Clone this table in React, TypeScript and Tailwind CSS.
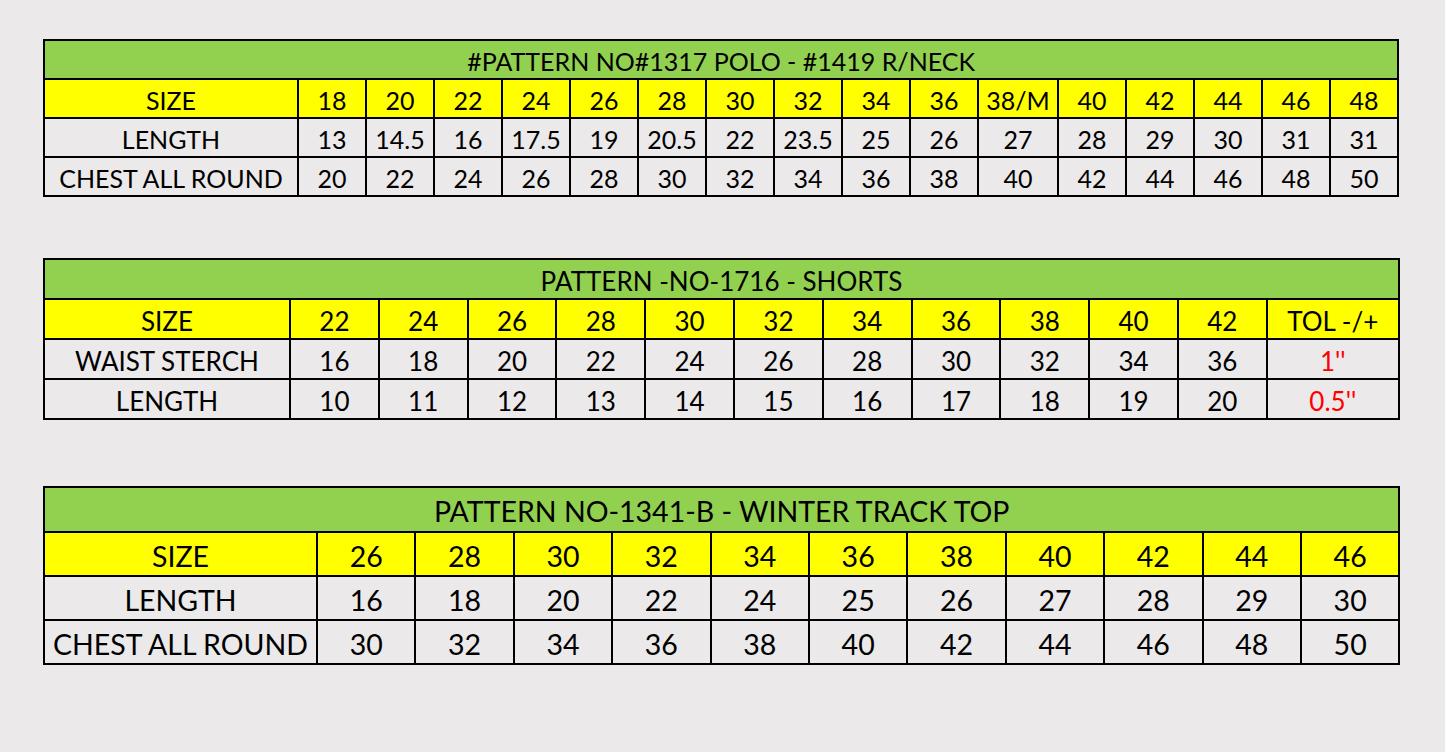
import React from "react";

const FONT = { fontFamily: "Lato, 'Open Sans', sans-serif" };

const t1Sizes = ["18", "20", "22", "24", "26", "28", "30", "32", "34", "36", "38/M", "40", "42", "44", "46", "48"];
const t1Len = ["13", "14.5", "16", "17.5", "19", "20.5", "22", "23.5", "25", "26", "27", "28", "29", "30", "31", "31"];
const t1Chest = ["20", "22", "24", "26", "28", "30", "32", "34", "36", "38", "40", "42", "44", "46", "48", "50"];

const t2Sizes = ["22", "24", "26", "28", "30", "32", "34", "36", "38", "40", "42"];
const t2Waist = ["16", "18", "20", "22", "24", "26", "28", "30", "32", "34", "36"];
const t2Len = ["10", "11", "12", "13", "14", "15", "16", "17", "18", "19", "20"];

const t3Sizes = ["26", "28", "30", "32", "34", "36", "38", "40", "42", "44", "46"];
const t3Len = ["16", "18", "20", "22", "24", "25", "26", "27", "28", "29", "30"];
const t3Chest = ["30", "32", "34", "36", "38", "40", "42", "44", "46", "48", "50"];

const cell = "border-2 border-black text-center align-middle px-0 pt-1 pb-0 leading-none whitespace-nowrap";

export default function App() {
  return (
    <div className="min-h-[752px] w-[1445px] bg-[#ebe9ea] pl-[43px] pt-[39px] text-black" style={FONT}>
      {/* Table 1 */}
      <table className="table-fixed border-collapse w-[1355px] text-[25px]">
        <colgroup>
          <col className="w-[254px]" />
          {t1Sizes.map((s) => (
            <col key={s} className={s === "38/M" ? "w-[80px]" : "w-[68px]"} />
          ))}
        </colgroup>
        <tbody>
          <tr className="h-[39px] bg-[#92d050]">
            <td colSpan={17} className={cell}>#PATTERN NO#1317 POLO - #1419 R/NECK</td>
          </tr>
          <tr className="h-[39px] bg-[#ffff00]">
            <td className={cell}>SIZE</td>
            {t1Sizes.map((s) => (
              <td key={s} className={cell}>{s}</td>
            ))}
          </tr>
          <tr className="h-[39px] bg-[#ebe9ea]">
            <td className={cell}>LENGTH</td>
            {t1Len.map((s, i) => (
              <td key={i} className={cell}>{s}</td>
            ))}
          </tr>
          <tr className="h-[39px] bg-[#ebe9ea]">
            <td className={cell}>CHEST ALL ROUND</td>
            {t1Chest.map((s, i) => (
              <td key={i} className={cell}>{s}</td>
            ))}
          </tr>
        </tbody>
      </table>

      {/* Table 2 */}
      <table className="mt-[61px] table-fixed border-collapse w-[1355px] text-[26px]">
        <colgroup>
          <col className="w-[246px]" />
          {t2Sizes.map((s) => (
            <col key={s} className="w-[88.8px]" />
          ))}
          <col className="w-[132px]" />
        </colgroup>
        <tbody>
          <tr className="h-[40px] bg-[#92d050]">
            <td colSpan={13} className={cell}>PATTERN -NO-1716 - SHORTS</td>
          </tr>
          <tr className="h-[40px] bg-[#ffff00]">
            <td className={cell}>SIZE</td>
            {t2Sizes.map((s) => (
              <td key={s} className={cell}>{s}</td>
            ))}
            <td className={cell}>TOL -/+</td>
          </tr>
          <tr className="h-[40px] bg-[#ebe9ea]">
            <td className={cell}>WAIST STERCH</td>
            {t2Waist.map((s, i) => (
              <td key={i} className={cell}>{s}</td>
            ))}
            <td className={`${cell} text-[#ff0000]`}>1''</td>
          </tr>
          <tr className="h-[40px] bg-[#ebe9ea]">
            <td className={cell}>LENGTH</td>
            {t2Len.map((s, i) => (
              <td key={i} className={cell}>{s}</td>
            ))}
            <td className={`${cell} text-[#ff0000]`}>0.5''</td>
          </tr>
        </tbody>
      </table>

      {/* Table 3 */}
      <table className="mt-[66px] table-fixed border-collapse w-[1355px] text-[28.5px]">
        <colgroup>
          <col className="w-[273px]" />
          {t3Sizes.map((s) => (
            <col key={s} className="w-[98.4px]" />
          ))}
        </colgroup>
        <tbody>
          <tr className="h-[45px] bg-[#92d050]">
            <td colSpan={12} className={cell}>PATTERN NO-1341-B - WINTER TRACK TOP</td>
          </tr>
          <tr className="h-[44px] bg-[#ffff00]">
            <td className={cell}>SIZE</td>
            {t3Sizes.map((s) => (
              <td key={s} className={cell}>{s}</td>
            ))}
          </tr>
          <tr className="h-[44px] bg-[#ebe9ea]">
            <td className={cell}>LENGTH</td>
            {t3Len.map((s, i) => (
              <td key={i} className={cell}>{s}</td>
            ))}
          </tr>
          <tr className="h-[44px] bg-[#ebe9ea]">
            <td className={cell}>CHEST ALL ROUND</td>
            {t3Chest.map((s, i) => (
              <td key={i} className={cell}>{s}</td>
            ))}
          </tr>
        </tbody>
      </table>
    </div>
  );
}
